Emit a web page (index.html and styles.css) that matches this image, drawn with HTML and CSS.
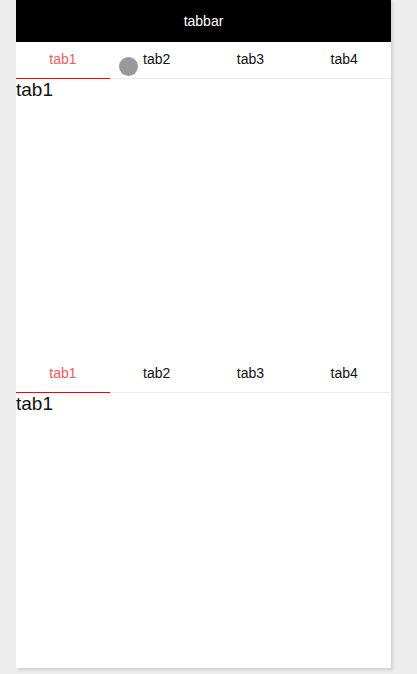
FILE: index.html
```html
<!DOCTYPE html>
<html>
<head>
<meta charset="utf-8">
<link rel="stylesheet" href="styles.css">
</head>
<body>
<div class="phone">
  <header class="topbar">tabbar</header>
  <section class="tabs">
    <nav class="tabbar">
      <div class="tab active">tab1</div>
      <div class="tab">tab2</div>
      <div class="tab">tab3</div>
      <div class="tab">tab4</div>
    </nav>
    <div class="panel">tab1</div>
  </section>
  <section class="tabs">
    <nav class="tabbar">
      <div class="tab active">tab1</div>
      <div class="tab">tab2</div>
      <div class="tab">tab3</div>
      <div class="tab">tab4</div>
    </nav>
    <div class="panel">tab1</div>
  </section>
  <div class="touch"></div>
</div>
</body>
</html>
```
FILE: styles.css
```css
html, body {
  margin: 0;
  padding: 0;
  background: #ededed;
  height: 100%;
}
body {
  font-family: "Liberation Sans", Arial, sans-serif;
  color: #111;
}
.phone {
  position: relative;
  width: 375px;
  height: 668px;
  margin-left: 16px;
  background: #fff;
  box-shadow: 2px 2px 3px rgba(0,0,0,0.12);
  display: flex;
  flex-direction: column;
  overflow: hidden;
}
.topbar {
  height: 42px;
  flex: none;
  background: #000;
  color: #fff;
  font-size: 14px;
  display: flex;
  align-items: center;
  justify-content: center;
}
.tabs {
  display: flex;
  flex-direction: column;
  height: 314px;
  flex: none;
}
.tabbar {
  display: flex;
  height: 37px;
  flex: none;
}
.tab {
  flex: 1;
  display: flex;
  align-items: center;
  justify-content: center;
  font-size: 14px;
  color: #111;
  padding-bottom: 3px;
  box-sizing: border-box;
  border-bottom: 1px solid #ebebeb;
}
.tab.active {
  color: #f55a5a;
  border-bottom-color: #ff0000;
}
.panel {
  flex: 1;
  font-size: 19px;
  line-height: 19px;
  padding-top: 1px;
}
.touch {
  position: absolute;
  left: 103px;
  top: 57px;
  width: 19px;
  height: 19px;
  border-radius: 50%;
  background: #999;
}
```
